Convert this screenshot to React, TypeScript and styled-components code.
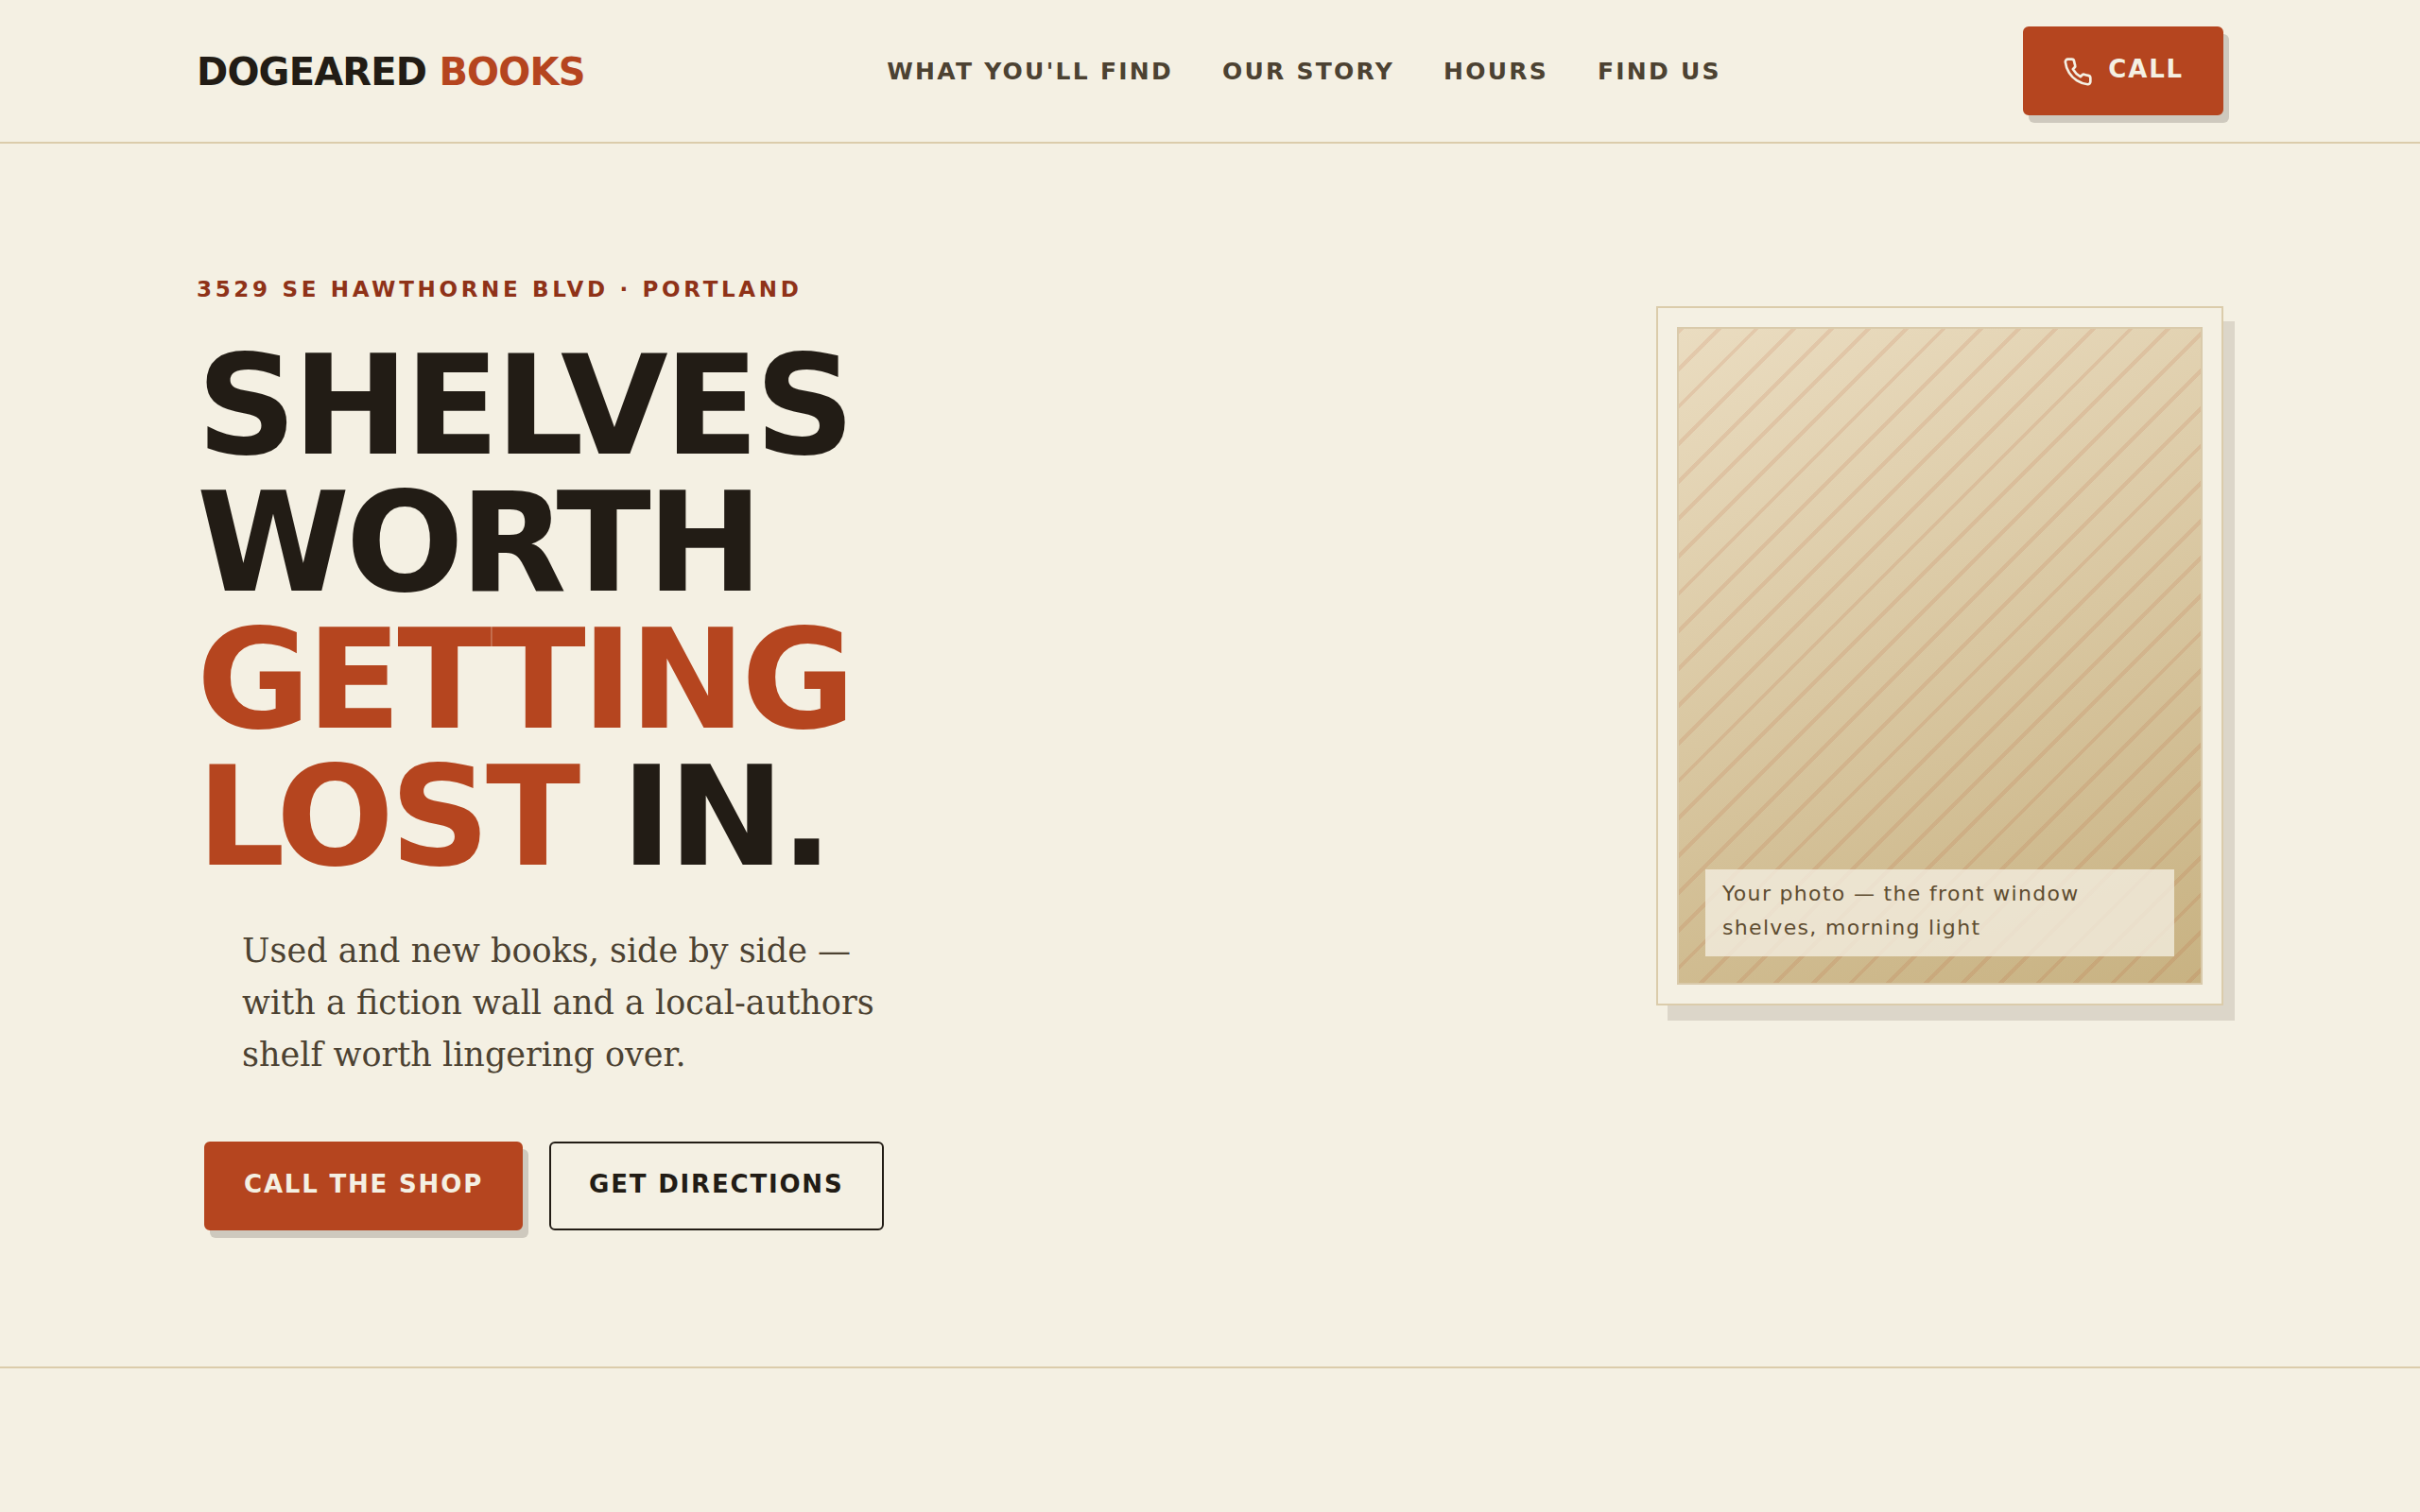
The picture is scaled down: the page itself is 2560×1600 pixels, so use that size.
import React from "react";
import styled, { createGlobalStyle, css } from "styled-components";

const color = {
  paper: "#f4f0e3",
  ink: "#221c15",
  soft: "#4c4232",
  rust: "#b5451f",
  rustDark: "#8f3218",
  line: "#dbccab",
};
const sans = `"DejaVu Sans", Verdana, sans-serif`;
const serif = `"DejaVu Serif", Georgia, serif`;

const GlobalStyle = createGlobalStyle`
  *, *::before, *::after { box-sizing: border-box; }
  body { margin: 0; background: ${color.paper}; color: ${color.ink}; font-family: ${sans}; }
  a { color: inherit; text-decoration: none; }
`;

const Header = styled.header`
  border-bottom: 2px solid ${color.line};
`;

const HeaderInner = styled.div`
  max-width: 2240px;
  margin: 0 auto;
  padding: 28px 48px;
  display: flex;
  align-items: center;
  justify-content: space-between;
`;

const Logo = styled.a`
  padding-top: 2px;
  font-size: 40px;
  line-height: 64px;
  font-weight: 700;
  letter-spacing: -0.02em;
  text-transform: uppercase;
`;

const Accent = styled.span`
  color: ${color.rust};
`;

const Nav = styled.nav`
  display: flex;
  gap: 52px;
  padding-top: 2px;
`;

const NavLink = styled.a`
  font-size: 25px;
  line-height: 40px;
  font-weight: 700;
  letter-spacing: 0.09em;
  text-transform: uppercase;
  color: ${color.soft};
`;

const Button = styled.a<{ $outline?: boolean }>`
  display: inline-flex;
  align-items: center;
  gap: 16px;
  padding: 22px 40px 26px;
  border: 2px solid ${color.rust};
  border-radius: 6px;
  font-size: 26px;
  line-height: 42px;
  font-weight: 700;
  letter-spacing: 0.07em;
  text-transform: uppercase;
  ${({ $outline }) =>
    $outline
      ? css`
          border-color: ${color.ink};
          color: ${color.ink};
        `
      : css`
          background: ${color.rust};
          color: ${color.paper};
          box-shadow: 6px 8px 0 rgba(34, 28, 21, 0.18);
        `}
`;

const PhoneGlyph = styled.svg`
  width: 32px;
  height: 32px;
  margin-top: 6px;
`;

const Hero = styled.section`
  border-bottom: 2px solid ${color.line};
`;

const HeroInner = styled.div`
  max-width: 2240px;
  margin: 0 auto;
  padding: 132px 48px 144px;
  display: flex;
  align-items: flex-start;
  justify-content: space-between;
`;

const Copy = styled.div`
  width: 740px;
`;

const Eyebrow = styled.p`
  margin: 0 0 29px;
  font-size: 23px;
  line-height: 44px;
  font-weight: 700;
  letter-spacing: 0.16em;
  text-transform: uppercase;
  color: ${color.rustDark};
`;

const Title = styled.h1`
  margin: 0;
  font-size: 147px;
  line-height: 145px;
  font-weight: 700;
  letter-spacing: -0.03em;
  text-transform: uppercase;
`;

const Lead = styled.p`
  margin: 42px 0 0 48px;
  font-family: ${serif};
  font-size: 35px;
  line-height: 55px;
  color: ${color.soft};
`;

const Actions = styled.div`
  display: flex;
  gap: 28px;
  margin: 64px 0 0 8px;
`;

const Frame = styled.figure`
  width: 600px;
  margin: 40px 0 0;
  padding: 20px;
  border: 2px solid ${color.line};
  background: ${color.paper};
  box-shadow: 12px 16px 0 rgba(60, 40, 30, 0.13);
`;

const Photo = styled.div`
  display: flex;
  align-items: flex-end;
  aspect-ratio: 556 / 696;
  padding: 28px;
  border: 2px solid #d9caab;
  background:
    repeating-linear-gradient(135deg, rgba(181, 69, 31, 0.12) 0 4px, transparent 4px 28px),
    linear-gradient(160deg, #eadcc0, #c8b282);
`;

const Caption = styled.figcaption`
  flex: 1;
  padding: 8px 18px 12px;
  font-size: 22px;
  line-height: 36px;
  letter-spacing: 0.06em;
  color: #5e4c30;
  background: rgba(244, 238, 226, 0.78);
`;

const navItems = [
  ["What you'll find", "#find"],
  ["Our story", "#story"],
  ["Hours", "#hours"],
  ["Find us", "#visit"],
];

function PhoneIcon() {
  return (
    <PhoneGlyph
      viewBox="0 0 24 24"
      fill="none"
      stroke="currentColor"
      strokeWidth="2"
      strokeLinecap="round"
      strokeLinejoin="round"
      aria-hidden="true"
    >
      <path d="M22 16.92v3a2 2 0 0 1-2.18 2 19.8 19.8 0 0 1-8.63-3.07 19.5 19.5 0 0 1-6-6A19.8 19.8 0 0 1 2.12 4.18 2 2 0 0 1 4.11 2h3a2 2 0 0 1 2 1.72c.13.96.36 1.9.7 2.81a2 2 0 0 1-.45 2.11L8.09 9.91a16 16 0 0 0 6 6l1.27-1.27a2 2 0 0 1 2.11-.45c.91.34 1.85.57 2.81.7A2 2 0 0 1 22 16.92z" />
    </PhoneGlyph>
  );
}

export default function App() {
  return (
    <>
      <GlobalStyle />
      <Header>
        <HeaderInner>
          <Logo href="#top">
            Dogeared <Accent>Books</Accent>
          </Logo>
          <Nav aria-label="Main">
            {navItems.map(([label, href]) => (
              <NavLink key={href} href={href}>
                {label}
              </NavLink>
            ))}
          </Nav>
          <Button href="#call">
            <PhoneIcon />
            Call
          </Button>
        </HeaderInner>
      </Header>
      <main id="top">
        <Hero>
          <HeroInner>
            <Copy>
              <Eyebrow>3529 SE Hawthorne Blvd · Portland</Eyebrow>
              <Title>
                Shelves worth <Accent>getting lost</Accent> in.
              </Title>
              <Lead>
                Used and new books, side by side — with a fiction wall and a local-authors shelf
                worth lingering over.
              </Lead>
              <Actions>
                <Button href="#call">Call the shop</Button>
                <Button href="#visit" $outline>
                  Get directions
                </Button>
              </Actions>
            </Copy>
            <Frame>
              <Photo>
                <Caption>Your photo — the front window shelves, morning light</Caption>
              </Photo>
            </Frame>
          </HeroInner>
        </Hero>
      </main>
    </>
  );
}
